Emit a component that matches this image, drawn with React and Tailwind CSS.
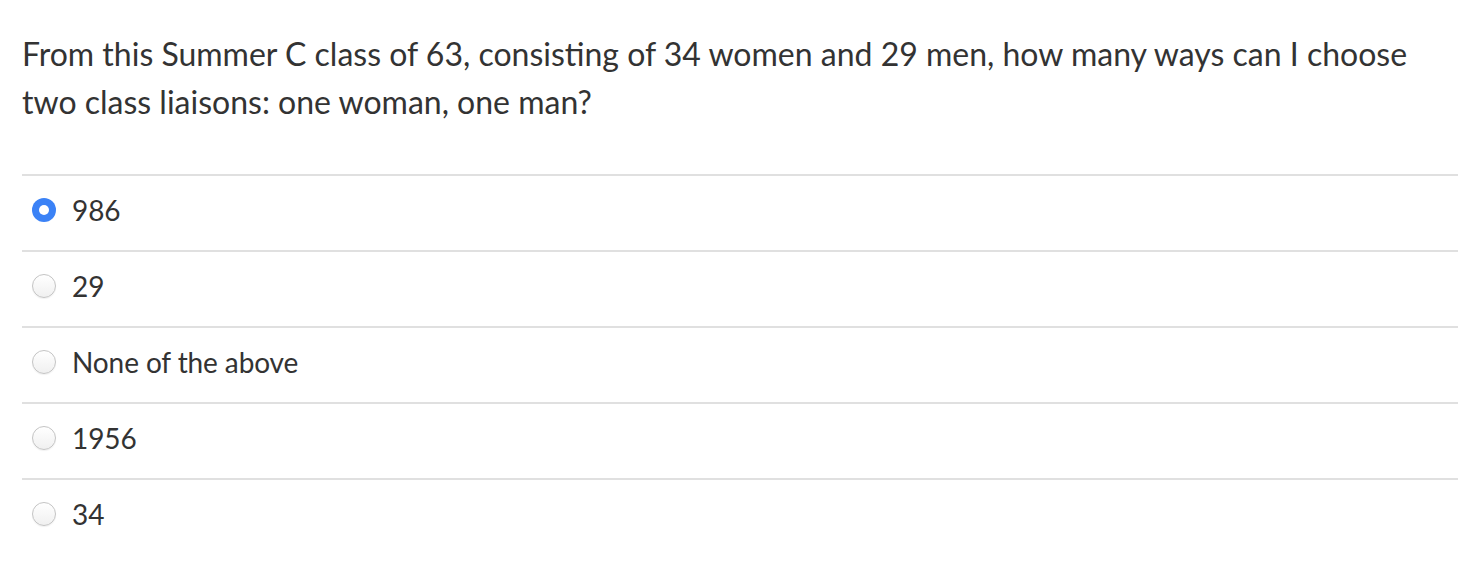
const options = [
  { id: "a", label: "986", checked: true },
  { id: "b", label: "29" },
  { id: "c", label: "None of the above" },
  { id: "d", label: "1956" },
  { id: "e", label: "34" },
];

const Radio = ({ checked }) =>
  checked ? (
    <span className="flex h-6 w-6 shrink-0 items-center justify-center rounded-full bg-[#3b82f6]">
      <span className="h-2.5 w-2.5 rounded-full bg-white" />
    </span>
  ) : (
    <span className="h-6 w-6 shrink-0 rounded-full border border-[#c4c4c4] bg-gradient-to-b from-white to-[#f0f0f0] shadow-[0_1px_1px_rgba(0,0,0,0.06)]" />
  );

export default function App() {
  return (
    <div className="min-h-[580px] bg-white pl-[22px] pr-[14px] pt-[30px] text-[#333] font-['Lato','Liberation_Sans',sans-serif]">
      <p className="text-[32px] leading-[48px]">
        From this Summer C class of 63, consisting of 34 women and 29 men, how many ways can I choose
        two class liaisons: one woman, one man?
      </p>

      <div className="mt-[48px]">
        {options.map((opt) => (
          <div
            key={opt.id}
            className="flex h-[76px] items-center gap-4 border-t-2 border-[#e0e0e0] pb-[6px] pl-[10px]"
          >
            <Radio checked={opt.checked} />
            <span className="text-[28px] tracking-[-0.1px]">{opt.label}</span>
          </div>
        ))}
      </div>
    </div>
  );
}
